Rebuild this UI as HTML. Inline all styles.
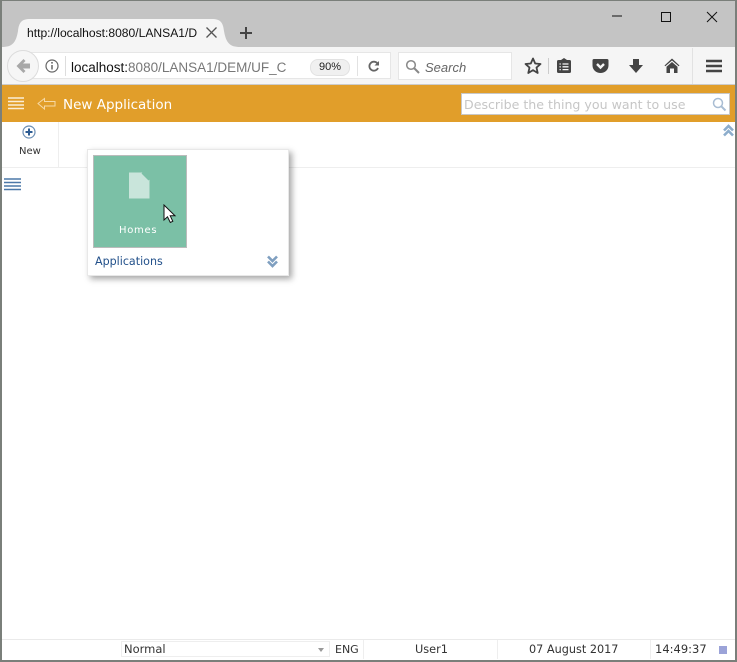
<!DOCTYPE html>
<html><head><meta charset="utf-8"><style>
html,body{margin:0;padding:0;background:#fff}
#p{position:relative;width:737px;height:662px;overflow:hidden;background:#fff;font-family:"DejaVu Sans","Liberation Sans",sans-serif}
#p div,#p svg,#p span.a{position:absolute}
.t{white-space:nowrap;line-height:1}
</style></head><body><div id="p">
<!-- chrome -->
<div style="left:0;top:0;width:737px;height:47px;background:#c4c4c4"></div>
<svg style="left:0;top:17px" width="250" height="30" viewBox="0 0 250 30"><path d="M2 30C12 30 16 26 18 14C19 5 22 2 30 2H212C220 2 223 5 224 14C226 26 230 30 240 30Z" fill="#f5f5f5"/></svg>
<div class="t" style="left:27px;top:26px;width:170px;overflow:hidden;font:12.100px 'Liberation Sans',sans-serif;color:#111;line-height:14px">http://localhost:8080/LANSA1/D</div>
<svg style="left:205px;top:26px" width="13" height="13"><path d="M1.500 1.500L11.500 11.500M11.500 1.500L1.500 11.500" stroke="#555" stroke-width="1.300"/></svg>
<svg style="left:239px;top:26px" width="14" height="14"><path d="M7 1V13M1 7H13" stroke="#444" stroke-width="2"/></svg>
<svg style="left:612px;top:10px" width="115" height="16"><path d="M0 6H10" stroke="#111" stroke-width="1"/><rect x="49.500" y="2.500" width="9" height="9" fill="none" stroke="#111" stroke-width="1"/><path d="M95 2L105 12M105 2L95 12" stroke="#111" stroke-width="1"/></svg>
<!-- toolbar -->
<div style="left:0;top:47px;width:737px;height:38px;background:#f5f5f5"></div>
<div style="left:0;top:84px;width:737px;height:1px;background:#ccc"></div>
<div style="left:22px;top:52px;width:369px;height:27px;background:#fff;border:1px solid #e6e6e6;box-sizing:border-box"></div>
<div style="left:7px;top:50px;width:30px;height:30px;border-radius:50%;background:#f6f6f6;border:1px solid #dcdcdc"></div>
<svg style="left:15px;top:58px" width="16" height="16"><path d="M8.500 1L1.500 8L8.500 15L10.500 13L8 10.500H15V5.500H8L10.500 3Z" fill="#a8a8a8"/></svg>
<svg style="left:45px;top:59px" width="14" height="14"><circle cx="7" cy="7" r="6" fill="none" stroke="#666" stroke-width="1.200"/><path d="M7 6V10.500" stroke="#666" stroke-width="1.500"/><rect x="6.200" y="3" width="1.600" height="1.600" fill="#666"/></svg>
<div style="left:65px;top:56px;width:1px;height:20px;background:#ddd"></div>
<div class="t" style="left:71px;top:60px;font:13.500px 'Liberation Sans',sans-serif;line-height:15px;color:#777"><span style="color:#111">localhost:</span>8080/LANSA1/DEM/UF_C</div>
<div class="t" style="left:310px;top:59px;width:38px;height:15px;border-radius:8px;background:#f0f0f0;border:1px solid #e2e2e2;text-align:center;font:11px/15px 'Liberation Sans',sans-serif;color:#222">90%</div>
<div style="left:357px;top:56px;width:1px;height:20px;background:#e2e2e2"></div>
<svg style="left:367px;top:60px" width="13" height="13"><path d="M10.500 3.500A4.500 4.500 0 1 0 11 8" fill="none" stroke="#666" stroke-width="1.800"/><path d="M7.500 5.500H12V1Z" fill="#666"/></svg>
<div style="left:391px;top:47px;width:7px;height:37px;background:#f5f5f5"></div>
<div style="left:398px;top:52px;width:114px;height:28px;background:#fff;border:1px solid #e6e6e6;box-sizing:border-box"></div>
<svg style="left:405px;top:59px" width="15" height="15"><circle cx="6" cy="6" r="4.300" fill="none" stroke="#888" stroke-width="1.500"/><path d="M9 9L14 14" stroke="#888" stroke-width="2"/></svg>
<div class="t" style="left:425px;top:60px;font:italic 13px/15px 'Liberation Sans',sans-serif;color:#666">Search</div>
<svg style="left:524px;top:57px" width="18" height="18" viewBox="0 0 18 18"><path d="M9 1.500L11.200 6.500L16.500 7L12.500 10.600L13.700 16L9 13.100L4.300 16L5.500 10.600L1.500 7L6.800 6.500Z" fill="none" stroke="#444" stroke-width="1.800" stroke-linejoin="round"/></svg>
<div style="left:548px;top:58px;width:1px;height:16px;background:#ccc"></div>
<svg style="left:556px;top:57px" width="16" height="17"><path d="M1 4.500Q1 3 2.500 3H5L8 1L11 3H13.500Q15 3 15 4.500V14.500Q15 16 13.500 16H2.500Q1 16 1 14.500Z" fill="#444"/><path d="M3.500 7H4.800M6.500 7H12.500M3.500 9.800H4.800M6.500 9.800H12.500M3.500 12.600H4.800M6.500 12.600H12.500" stroke="#f5f5f5" stroke-width="1.300"/></svg>
<svg style="left:592px;top:58px" width="17" height="16"><path d="M2 1H15Q16.500 1 16.500 2.500V7.500C16.500 12 12.500 15 8.500 15S0.500 12 0.500 7.500V2.500Q0.500 1 2 1Z" fill="#444"/><path d="M5 6L8.500 9.500L12 6" fill="none" stroke="#f5f5f5" stroke-width="2.400"/></svg>
<svg style="left:628px;top:58px" width="16" height="16"><path d="M5 1H11V7H15L8 15L1 7H5Z" fill="#444"/></svg>
<svg style="left:664px;top:58px" width="16" height="16"><path d="M8 0.500L15.500 7.500L14.700 8.300L8 2.500L1.300 8.300L0.500 7.500Z" fill="#444"/><path d="M8 4L13.500 8.800V15H10V10.500H6V15H2.500V8.800Z" fill="#444"/></svg>
<div style="left:692px;top:48px;width:1px;height:36px;background:#e2e2e2"></div>
<svg style="left:706px;top:59px" width="16" height="14"><path d="M0 2H16M0 7H16M0 12H16" stroke="#444" stroke-width="2.600"/></svg>
<!-- orange bar -->
<div style="left:0;top:85px;width:737px;height:37px;background:#e19e2a"></div>
<svg style="left:8px;top:97px" width="17" height="14"><path d="M0 1H16M0 4.500H16M0 8H16M0 11.500H16" stroke="#fbeed6" stroke-width="1.500"/></svg>
<svg style="left:37px;top:97px" width="20" height="14"><path d="M1 6.500L7.500 1.500V4.500H18V9H7.500V12Z" fill="none" stroke="#f6d9a5" stroke-width="1"/></svg>
<div class="t" style="left:63px;top:98px;font-size:13.500px;color:#fff;line-height:15px">New Application</div>
<div style="left:461px;top:93px;width:269px;height:22px;background:#fff;border:1px solid #c8c8c8;box-sizing:border-box"></div>
<div class="t" style="left:464px;top:97px;font-size:12.600px;color:#c6c6c6;line-height:15px">Describe the thing you want to use</div>
<svg style="left:712px;top:97px" width="15" height="15"><circle cx="6" cy="6" r="4.500" fill="none" stroke="#a9bdd3" stroke-width="1.500"/><path d="M9.300 9.300L13.500 13.500" stroke="#a9bdd3" stroke-width="2"/></svg>
<!-- app toolbar -->
<div style="left:58px;top:122px;width:1px;height:45px;background:#eee"></div>
<div style="left:0;top:167px;width:737px;height:1px;background:#eee"></div>
<svg style="left:22px;top:125px" width="14" height="14"><circle cx="7" cy="7" r="6" fill="none" stroke="#6d8fb5" stroke-width="1.200"/><path d="M7 3.500V10.500M3.500 7H10.500" stroke="#2d5c93" stroke-width="2"/></svg>
<div class="t" style="left:19px;top:146px;font-size:10px;color:#333;line-height:11px">New</div>
<svg style="left:722px;top:124px" width="13" height="14"><path d="M2 6.500L6.500 2L11 6.500M2 11.500L6.500 7L11 11.500" fill="none" stroke="#8dadcc" stroke-width="2.600"/></svg>
<svg style="left:4px;top:177px" width="17" height="15"><path d="M0 2H17M0 5.500H17M0 9H17M0 12.500H17" stroke="#4c78a8" stroke-width="1.500"/></svg>
<!-- popup -->
<div style="left:87px;top:149px;width:202px;height:127px;background:#fff;border:1px solid #e8e8e8;box-sizing:border-box;box-shadow:3px 3px 6px rgba(0,0,0,.35)"></div>
<div style="left:93px;top:155px;width:94px;height:93px;background:#7bc0a6;border:1px solid #bbb;box-sizing:border-box"></div>
<svg style="left:129px;top:172px" width="21" height="27"><path d="M0 0.500H13L20.500 8V26.500H0Z" fill="#c9e5db"/><path d="M13 1L20 8" stroke="#7bc0a6" stroke-width="1.400"/></svg>
<div class="t" style="left:119px;top:225px;font-size:10px;letter-spacing:.7px;color:#fff;line-height:11px">Homes</div>
<svg style="left:163px;top:204px" width="14" height="20"><path d="M1 1V16L4.500 12.800L7.300 18.500L9.800 17.300L7.200 11.800H12Z" fill="#fff" stroke="#111" stroke-width="1"/></svg>
<div class="t" style="left:95px;top:255px;font-size:11.100px;color:#22508a;line-height:13px">Applications</div>
<svg style="left:266px;top:254px" width="13" height="14"><path d="M2 2.500L6.500 7L11 2.500M2 7.500L6.500 12L11 7.500" fill="none" stroke="#7f9fc0" stroke-width="2.600"/></svg>
<!-- status bar -->
<div style="left:0;top:639px;width:737px;height:1px;background:#eaeaea"></div>
<div style="left:121px;top:641px;width:209px;height:16px;border:1px solid #eee;box-sizing:border-box"></div>
<div class="t" style="left:124px;top:643px;font-size:11.500px;color:#333;line-height:13px">Normal</div>
<svg style="left:318px;top:648px" width="6" height="4"><path d="M0 0H6L3 4Z" fill="#999"/></svg>
<div class="t" style="left:335px;top:643px;font-size:11px;color:#333;line-height:13px">ENG</div>
<div style="left:363px;top:640px;width:1px;height:19px;background:#eee"></div>
<div class="t" style="left:415px;top:643px;font-size:11.300px;color:#333;line-height:13px">User1</div>
<div style="left:497px;top:640px;width:1px;height:19px;background:#eee"></div>
<div class="t" style="left:529px;top:643px;font-size:11.250px;color:#333;line-height:13px">07 August 2017</div>
<div style="left:650px;top:640px;width:1px;height:19px;background:#eee"></div>
<div class="t" style="left:655px;top:643px;font-size:11.500px;color:#333;line-height:13px">14:49:37</div>
<div style="left:719px;top:646px;width:8px;height:8px;background:#9ba3d8"></div>
<!-- window border -->
<div style="left:0;top:0;width:737px;height:662px;border:1px solid #7a7f7a;border-left-width:2px;border-bottom-width:2px;border-right-width:2px;box-sizing:border-box"></div>
</div></body></html>
